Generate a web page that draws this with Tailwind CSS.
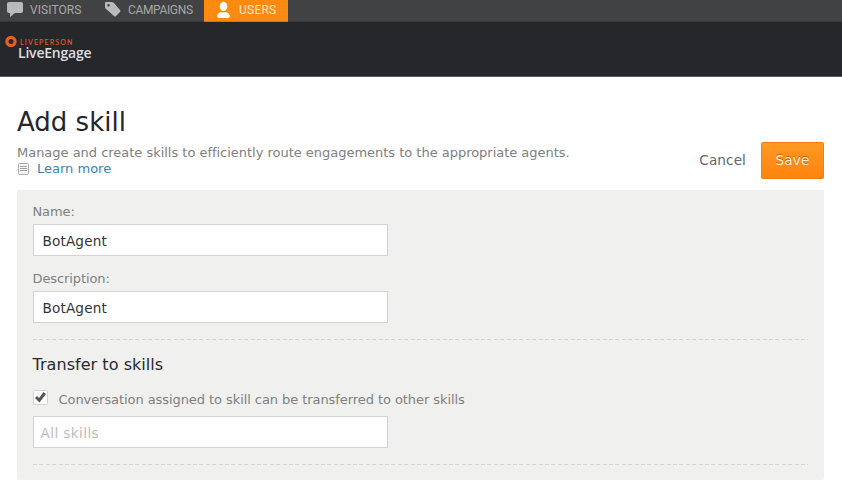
<!DOCTYPE html>
<html lang="en"><head><meta charset="utf-8"><title>Add skill</title>
<script src="https://cdn.jsdelivr.net/npm/@tailwindcss/browser@4"></script></head>
<body class="w-[842px] h-[485px] overflow-hidden bg-white font-['DejaVu_Sans',sans-serif] text-[#808080] text-[13px]">
<nav class="flex h-[22px] bg-[#414244] border-b border-[#37383a] font-['Roboto',sans-serif] text-[12px] leading-[21px] text-[#a6a7a8]">
  <a class="flex w-[98px] pl-[7px]"><svg class="w-4 h-[18px] mr-[7px]" viewBox="0 0 16 18"><path fill="#b9babb" d="M2 2H14Q16 2 16 4V11Q16 13 14 13H8L3 17V13H2Q0 13 0 11V4Q0 2 2 2Z"/></svg><span class="tracking-[0.08px]">VISITORS</span></a>
  <a class="flex w-[106px] pl-[7px]"><svg class="w-4 h-[18px] mr-[7px]" viewBox="0 0 16 18"><path fill="#b9babb" fill-rule="evenodd" d="M1 2H6Q8 2 9 3L15 10Q16 11 15 12L11 16Q10 17 9 16L1 9Q0 8 0 7V3Q0 2 1 2ZM3.500 4A1.300 1.300 0 1 0 3.500 6.600A1.300 1.300 0 1 0 3.500 4Z"/></svg><span class="tracking-[-0.35px]">CAMPAIGNS</span></a>
  <a class="flex w-[84px] h-[22px] pl-[13px] bg-[#ff8a10] border-b border-[#cf741a] text-[#ffe5c5]"><svg class="w-[13px] h-5 mr-[9px]" viewBox="0 0 13 20"><ellipse cx="6.500" cy="6.500" rx="3.800" ry="4.700" fill="#fff"/><path fill="#fff" d="M0 16Q1 12.500 4.500 12Q6.500 13 8.500 12Q12 12.500 13 16Q13 18 11 18H2Q0 18 0 16Z"/></svg><span class="tracking-[0.25px]">USERS</span></a>
</nav>
<header class="h-[55px] bg-[#26272b] border-b border-[#5b5a60] pt-[12px] pl-[5px]">
  <div class="flex h-[13px]"><svg class="w-3 h-[13px] mr-[3px]" viewBox="0 0 12 13"><circle cx="6" cy="7.500" r="4.100" fill="none" stroke="#e85e20" stroke-width="3.200"/></svg><span class="text-[7px] leading-[16px] tracking-[1.15px] font-['Lato',sans-serif] font-semibold text-[#df5b23]">LIVEPERSON</span></div>
  <div class="pl-[13px] h-4 leading-[12px] text-[14px] tracking-[-0.2px] font-['Open_Sans',sans-serif] font-semibold text-[#dddddf]">LiveEngage</div>
</header>
<main class="pl-[17px] pr-[18px]">
  <section class="flex justify-between h-[113px]">
    <div class="pt-[28px]">
      <h1 class="text-[26px] leading-[34px] text-[#25262a]">Add skill</h1>
      <p class="mt-[6px] leading-[16px] whitespace-nowrap tracking-[-0.02px]">Manage and create skills to efficiently route engagements to the appropriate agents.</p>
      <a class="flex leading-[16px] text-[#3983b3]"><svg class="w-[12px] h-[14px] mr-[7px] mt-px ml-px" viewBox="0 0 12 14"><rect x=".5" y="1.500" width="10" height="11" rx="1" fill="#f6f6f6" stroke="#a9a9a9"/><path stroke="#a0a0a0" d="M2 4.500H9M2 6.500H9M2 8.500H9"/></svg><span>Learn more</span></a>
    </div>
    <div class="flex pt-[65px]"><button class="h-[37px] mr-[15px] text-[13.6px] tracking-[0.1px] text-[#676767]">Cancel</button><button class="w-[63px] h-[37px] pb-px rounded-[2px] border border-[#f17d13] bg-linear-to-b from-[#ff9a22] to-[#ff830a] text-[13.6px] tracking-[0.1px] text-[#fff0dc] [text-shadow:0_-1px_1px_#b85b00]">Save</button></div>
  </section>
  <section class="h-[290px] rounded-[2px] bg-[#f0f0ee] pl-[15.5px] pr-4 pt-[14px]">
    <label class="block h-5 leading-[16px] tracking-[-0.1px]">Name:</label>
    <div class="w-[355px] h-[32px] border border-[#d3d3d3] bg-white px-[9px] leading-[32px] text-[13.6px] tracking-[0.15px] text-[#333]">BotAgent</div>
    <label class="block mt-[15px] h-5 leading-[16px] tracking-[-0.1px]">Description:</label>
    <div class="w-[355px] h-[32px] border border-[#d3d3d3] bg-white px-[9px] leading-[32px] text-[13.6px] tracking-[0.15px] text-[#333]">BotAgent</div>
    <div class="mt-4 h-px bg-[repeating-linear-gradient(90deg,#d5d5d3_0_4px,transparent_4px_6.400px)]"></div>
    <h2 class="mt-[14px] text-[16px] leading-[22px] tracking-[0.05px] text-[#292a2e]">Transfer to skills</h2>
    <div class="flex mt-[14px] h-[26px]"><svg class="w-[15px] h-[15px] mr-[11px]" viewBox="0 0 15 15"><rect x=".5" y=".5" width="14" height="14" rx="1" fill="#fff" stroke="#d2d2d2"/><path d="M2 8L4 6L6 8L10.500 2L13 4L6.500 12.500Z" fill="#555"/></svg><span class="leading-[19px] tracking-[-0.07px]">Conversation assigned to skill can be transferred to other skills</span></div>
    <div class="w-[355px] h-[32px] border border-[#d3d3d3] bg-white px-[7px] leading-[32px] text-[13.6px] tracking-[0.4px] text-[#bdbdbd]">All skills</div>
    <div class="mt-4 h-px bg-[repeating-linear-gradient(90deg,#d5d5d3_0_4px,transparent_4px_6.400px)]"></div>
  </section>
</main></body></html>
